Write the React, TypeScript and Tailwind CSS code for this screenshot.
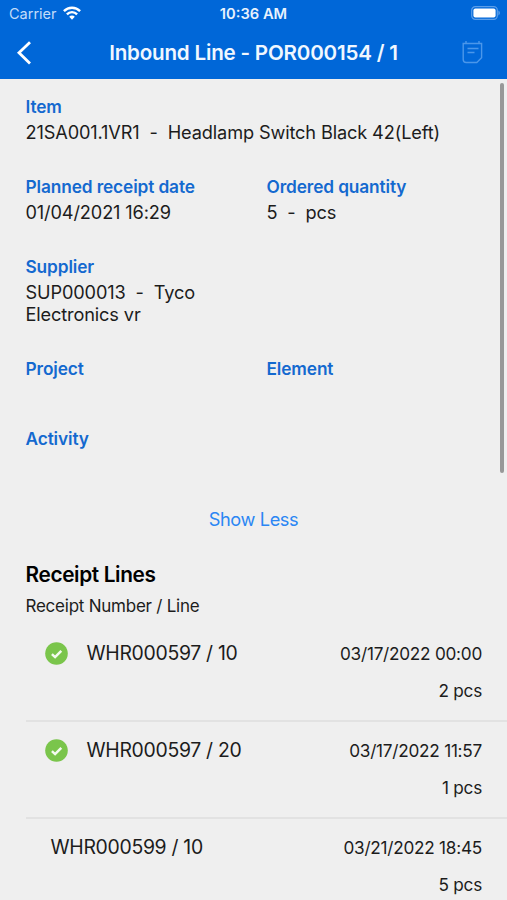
import React from 'react';

interface FieldProps {
  label: string;
  children?: React.ReactNode;
}

interface ReceiptLine {
  id: string;
  date: string;
  quantity: string;
  received: boolean;
}

const receiptLines: ReceiptLine[] = [
  { id: 'WHR000597 / 10', date: '03/17/2022 00:00', quantity: '2 pcs', received: true },
  { id: 'WHR000597 / 20', date: '03/17/2022 11:57', quantity: '1 pcs', received: true },
  { id: 'WHR000599 / 10', date: '03/21/2022 18:45', quantity: '5 pcs', received: false },
];

const StatusBar = () => (
  <div className="grid h-7 grid-cols-3 items-center pl-[9px] pr-[6px]">
    <div className="flex items-center gap-[6px]">
      <span className="text-[14.5px] text-[#c3dcf8]">Carrier</span>
      <svg className="-mt-[2px]" width="18" height="14" viewBox="0 0 18 14" fill="none" stroke="#fff" strokeWidth="2.4">
        <path d="M0.9 5.2a11.3 11.3 0 0 1 16.2 0" />
        <path d="M3.9 8.3a7.1 7.1 0 0 1 10.2 0" />
        <path d="M6.2 10.8a3.8 3.8 0 0 1 5.6 0L9 13.8z" fill="#fff" stroke="none" />
      </svg>
    </div>
    <span className="pr-[3px] text-center text-[14.7px] font-semibold text-[#e8f2fd]">10:36 AM</span>
    <svg className="-mt-[2px] justify-self-end" width="30" height="14" viewBox="0 0 30 14">
      <rect x="0.7" y="0.7" width="25.6" height="12.6" rx="3.6" fill="none" stroke="#5b9ee9" strokeWidth="1.2" />
      <rect x="2.4" y="2.4" width="22.2" height="9.2" rx="2" fill="#fff" />
      <path d="M27.4 4.6c2 .7 2 4.1 0 4.8z" fill="#5b9ee9" />
    </svg>
  </div>
);

const Header = () => (
  <header className="h-[79px] bg-[#0067d8]">
    <StatusBar />
    <div className="flex h-[49px] items-center justify-between pl-[16px] pr-[24px]">
      <svg width="16" height="24" viewBox="0 0 16 24" fill="none" stroke="#fff" strokeWidth="2.8">
        <path d="M14 1.2L3 11.8L14 22.6" />
      </svg>
      <h1 className="whitespace-nowrap pl-[13px] pt-px text-[20.6px] font-semibold tracking-[-0.2px] text-[#f0f7ff]">
        Inbound Line - POR000154 / 1
      </h1>
      <svg className="-mt-px" width="21" height="24" viewBox="0 0 21 24" fill="none" stroke="#4b97ea" strokeWidth="1.4">
        <path d="M1.2 3.5h18.4v14.2l-4.8 4.8H4.2a3 3 0 0 1-3-3z" />
        <path d="M4 1v3M17 1v3M5.5 8.5h11M5.5 12.5h7" />
      </svg>
    </div>
  </header>
);

const Field = ({ label, children }: FieldProps) => (
  <div>
    <div className="h-6 whitespace-nowrap text-[17.3px] leading-[23px] font-semibold tracking-[-0.12px] text-[#1469cf]">
      {label}
    </div>
    <div className="mt-[2px] mb-px min-h-3 whitespace-pre text-[18.2px] leading-[22px] tracking-[-0.14px]">
      {children}
    </div>
  </div>
);

const CheckBadge = () => (
  <svg className="mr-[19px] -mt-[2px] shrink-0" width="23" height="23" viewBox="0 0 23 23">
    <circle cx="11.5" cy="11.5" r="11.3" fill="#7ac54b" />
    <path d="M6.9 12.1l3.2 3l6.2-6.3" fill="none" stroke="#f4fbef" strokeWidth="2.5" />
  </svg>
);

const ReceiptRow = ({ line }: { line: ReceiptLine }) => (
  <li className="flex h-[97px] justify-between border-b-2 border-[#e2e2e2] pr-[25px]">
    <div className={`flex h-[58px] items-center ${line.received ? 'pl-[19px]' : 'pl-[25px]'}`}>
      {line.received && <CheckBadge />}
      <span className="whitespace-nowrap text-[19.4px] tracking-[-0.3px]">{line.id}</span>
    </div>
    <div className="flex flex-col items-end text-[17.2px] tracking-[-0.25px]">
      <span className="h-[58px] leading-[58px]">{line.date}</span>
      <span className="-mt-1 leading-6">{line.quantity}</span>
    </div>
  </li>
);

const App = () => {
  return (
    <div className="relative h-[900px] w-full overflow-hidden bg-[#efefef] font-['Inter',sans-serif] text-[#1c1c1c]">
      <Header />

      {/* Line details */}
      <section className="grid grid-cols-[241px_1fr] gap-y-[31px] pl-[25.5px] pt-4">
        <div className="col-span-2">
          <Field label="Item">{'21SA001.1VR1  -  Headlamp Switch Black 42(Left)'}</Field>
        </div>
        <Field label="Planned receipt date">01/04/2021 16:29</Field>
        <Field label="Ordered quantity">{'5  -  pcs'}</Field>
        <div className="col-span-2">
          <Field label="Supplier">{'SUP000013  -  Tyco\nElectronics vr'}</Field>
        </div>
        <Field label="Project" />
        <Field label="Element" />
        <Field label="Activity" />
      </section>

      <div className="mt-[39px] flex justify-center">
        <button className="text-[18.2px] leading-7 tracking-[-0.4px] text-[#2a86f4]">Show Less</button>
      </div>

      {/* Receipts */}
      <section className="pl-[25.5px] pt-7">
        <h2 className="text-[20.8px] leading-[27px] font-semibold tracking-[-0.35px] text-black">Receipt Lines</h2>
        <p className="mt-[6px] text-[17px] leading-6 tracking-[-0.24px]">Receipt Number / Line</p>
        <ul className="mt-[7px]">
          {receiptLines.map((line) => (
            <ReceiptRow key={line.id} line={line} />
          ))}
        </ul>
      </section>

      {/* Scroll indicator */}
      <div className="absolute right-[3px] top-[83px] h-[390px] w-1 rounded-full bg-[#989898]" />
    </div>
  );
};

export default App;
